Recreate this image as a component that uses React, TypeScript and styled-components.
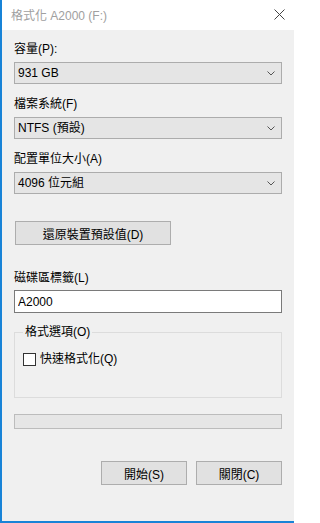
import { ReactNode } from 'react';
import styled, { createGlobalStyle } from 'styled-components';

const GlobalStyle = createGlobalStyle`
  html, body {
    margin: 0;
    padding: 0;
    background: #ffffff;
  }
  * {
    box-sizing: border-box;
  }
`;

const FONT = `"Liberation Sans", "Noto Sans CJK TC", sans-serif`;

interface SelectBoxProps {
  value: string;
}

const SelectBox = ({ value }: SelectBoxProps) => (
  <Select>
    <span>{value}</span>
    <svg width="8" height="5" viewBox="0 0 8 5">
      <path d="M0.5 0.5 L4 4 L7.5 0.5" fill="none" stroke="#555" strokeWidth="1" />
    </svg>
  </Select>
);

const Field = ({ label, children }: { label: string; children: ReactNode }) => (
  <FieldWrap>
    <Label>{label}</Label>
    {children}
  </FieldWrap>
);

const App = () => {
  return (
    <>
      <GlobalStyle />
      <Window>
        <TitleBar>
          <Title>格式化 A2000 (F:)</Title>
          <CloseButton aria-label="close">
            <svg width="11" height="11" viewBox="0 0 11 11">
              <path d="M0.5 0.5 L10.5 10.5 M10.5 0.5 L0.5 10.5" stroke="#444" strokeWidth="1" />
            </svg>
          </CloseButton>
        </TitleBar>
        <Body>
          <Field label="容量(P):">
            <SelectBox value="931 GB" />
          </Field>
          <Field label="檔案系統(F)">
            <SelectBox value="NTFS (預設)" />
          </Field>
          <Field label="配置單位大小(A)">
            <SelectBox value="4096 位元組" />
          </Field>
          <RestoreButton>還原裝置預設值(D)</RestoreButton>
          <Field label="磁碟區標籤(L)">
            <TextInput defaultValue="A2000" />
          </Field>
          <GroupBox>
            <Legend>格式選項(O)</Legend>
            <CheckRow>
              <CheckBox />
              <span>快速格式化(Q)</span>
            </CheckRow>
          </GroupBox>
          <Progress />
          <Footer>
            <DialogButton>開始(S)</DialogButton>
            <DialogButton>關閉(C)</DialogButton>
          </Footer>
        </Body>
      </Window>
    </>
  );
};

export default App;

const Window = styled.div`
  width: 294px;
  height: 523px;
  display: flex;
  flex-direction: column;
  border-left: 2px solid #1883d7;
  border-bottom: 2px solid #1883d7;
  font-family: ${FONT};
  font-size: 12px;
  color: #000;
`;

const TitleBar = styled.div`
  height: 30px;
  flex: none;
  display: flex;
  align-items: center;
  justify-content: space-between;
  background: #ffffff;
  padding: 0 8px 0 9px;
`;

const Title = styled.span`
  color: #a0a0a0;
  font-size: 12px;
  line-height: 16px;
  margin-top: 1px;
`;

const CloseButton = styled.div`
  width: 14px;
  height: 14px;
  display: flex;
  align-items: center;
  justify-content: center;
  margin-top: -1px;
`;

const Body = styled.div`
  flex: 1;
  background: #f0f0f0;
  padding: 11px 12px 0 12px;
  display: flex;
  flex-direction: column;
`;

const FieldWrap = styled.div`
  display: flex;
  flex-direction: column;
  gap: 5px;
  margin-bottom: 12px;
`;

const Label = styled.div`
  line-height: 16px;
  height: 16px;
`;

const Select = styled.div`
  height: 22px;
  display: flex;
  align-items: center;
  justify-content: space-between;
  background: #e5e5e5;
  border: 1px solid #acacac;
  padding: 0 6px 0 3px;
  line-height: 16px;
`;

const RestoreButton = styled.div`
  width: 156px;
  height: 24px;
  margin: 15px 0 25px 1px;
  display: flex;
  align-items: center;
  justify-content: center;
  background: #e1e1e1;
  border: 1px solid #adadad;
`;

const TextInput = styled.input`
  height: 23px;
  margin: -1px 0 0;
  padding: 0 3px;
  border: 1px solid #7a7a7a;
  background: #ffffff;
  font-family: ${FONT};
  font-size: 12px;
  color: #000;
  outline: none;
`;

const GroupBox = styled.fieldset`
  margin: -1px 0 0;
  padding: 11px 8px 0;
  border: 1px solid #dcdcdc;
  height: 74px;
`;

const Legend = styled.legend`
  padding: 0 2px;
  line-height: 16px;
`;

const CheckRow = styled.div`
  display: flex;
  align-items: center;
  gap: 4px;
  line-height: 16px;
`;

const CheckBox = styled.span`
  width: 13px;
  height: 13px;
  border: 1px solid #333;
  background: #ffffff;
  flex: none;
`;

const Progress = styled.div`
  height: 15px;
  margin-top: 16px;
  background: #e6e6e6;
  border: 1px solid #bcbcbc;
`;

const Footer = styled.div`
  display: flex;
  justify-content: flex-end;
  gap: 9px;
  margin-top: 32px;
`;

const DialogButton = styled.div`
  width: 86px;
  height: 24px;
  display: flex;
  align-items: center;
  justify-content: center;
  background: #e1e1e1;
  border: 1px solid #adadad;
`;
